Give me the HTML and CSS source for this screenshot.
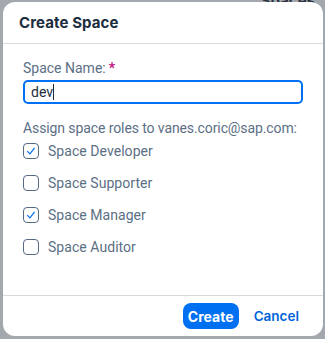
FILE: index.html
```html
<!DOCTYPE html>
<html>
<head>
<meta charset="utf-8">
<link rel="stylesheet" href="styles.css">
</head>
<body>
<div class="backdrop">
  <span class="bg-title">Spaces</span>
  <div class="dialog">
    <div class="header"><h1>Create Space</h1></div>
    <div class="content">
      <label class="label">Space Name:<span class="req">*</span></label>
      <div class="input">dev<span class="caret"></span></div>
      <div class="assign">Assign space roles to vanes.coric@sap.com:</div>
      <div class="row"><span class="cb checked"><svg viewBox="0 0 16 16" width="16" height="16"><path d="M4.3 8.2 L6.9 10.8 L11.6 4.8" fill="none" stroke="#0070f2" stroke-width="1.2"/></svg></span>Space Developer</div>
      <div class="row"><span class="cb"></span>Space Supporter</div>
      <div class="row"><span class="cb checked"><svg viewBox="0 0 16 16" width="16" height="16"><path d="M4.3 8.2 L6.9 10.8 L11.6 4.8" fill="none" stroke="#0070f2" stroke-width="1.2"/></svg></span>Space Manager</div>
      <div class="row"><span class="cb"></span>Space Auditor</div>
    </div>
    <div class="footer">
      <button class="btn primary">Create</button>
      <button class="btn link">Cancel</button>
    </div>
  </div>
</div>
</body>
</html>
```
FILE: styles.css
```css
html, body { margin: 0; padding: 0; }
body {
  width: 325px; height: 339px; overflow: hidden;
  background: #a3a7ae;
  font-family: "Roboto", "Liberation Sans", sans-serif;
}
.backdrop { position: relative; width: 325px; height: 339px; padding-top: 2px; box-sizing: border-box; }
.bg-title {
  position: absolute; right: 10px; top: -9px;
  font: bold 15px "Inter", sans-serif; color: #2c3440;
}
.dialog {
  position: relative;
  margin-left: 3px; width: 320px; height: 334px;
  background: #fff; border-radius: 12px;
  display: flex; flex-direction: column;
  box-sizing: border-box;
}
.header {
  height: 41px; border-bottom: 1px solid #d9d9d9;
  display: flex; align-items: center; padding-left: 16px;
}
.header h1 {
  margin: 0; font-family: "Inter", "Noto Sans", sans-serif; font-weight: 700; font-size: 15px; color: #1d2d3e;
  letter-spacing: 0.1px;
}
.content { flex: 1; padding: 16px 20px 0 20px; }
.label { display: block; font-size: 14px; line-height: 16px; color: #5b6f85; }
.req { color: #c0137a; margin-left: 3px; font-weight: 700; }
.input {
  margin-top: 4px; height: 24px; box-sizing: border-box;
  border: 2px solid #0070f2; border-radius: 5px;
  font-size: 14px; line-height: 20px; padding-left: 6px; color: #1d2d3e;
  display: flex; align-items: center;
}
.caret { display: inline-block; width: 1px; height: 16px; background: #1d2d3e; margin-left: 0; }
.assign { margin-top: 16px; margin-bottom: -1px; font-size: 14px; line-height: 16px; color: #5b6f85; letter-spacing: -0.1px; white-space: nowrap; }
.row { height: 32px; display: flex; align-items: center; font-size: 14px; color: #5b6f85; letter-spacing: 0.05px; }
.cb {
  width: 16px; height: 16px; box-sizing: border-box;
  border: 1px solid #556b82; border-radius: 4px; margin-right: 9px;
  position: relative;
}
.cb svg { position: absolute; left: -1px; top: -1px; }
.footer {
  height: 40px; border-top: 1px solid #d9d9d9;
  display: flex; align-items: center; justify-content: flex-end;
  padding-right: 16px; gap: 7px;
}
.btn { font-family: "Inter", "Noto Sans", sans-serif; font-size: 14px; font-weight: 700; border: none; cursor: pointer; }
.primary {
  background: #0070f2; color: #fff; height: 26px; width: 56px; border-radius: 8px; padding: 0;
}
.link { background: none; color: #0064d9; font-weight: 600; padding: 0 8px; height: 26px; font-size: 13.5px; }
```
